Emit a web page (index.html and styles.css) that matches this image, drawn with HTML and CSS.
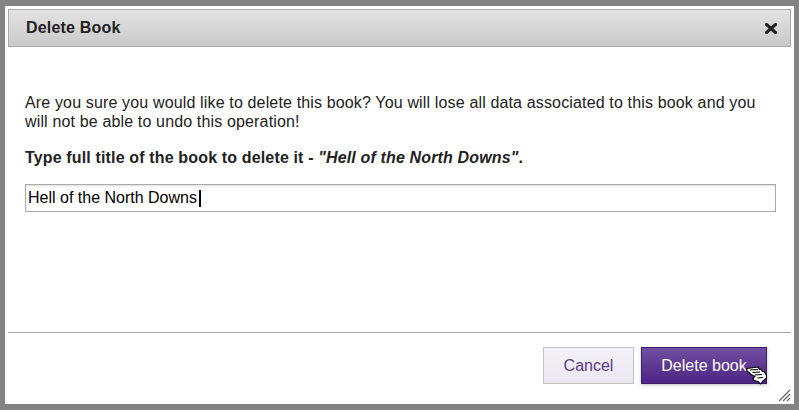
FILE: index.html
```html
<!DOCTYPE html>
<html lang="en">

<head>
	<meta charset="utf-8" />
	<title>Delete Book</title>
	<link rel="stylesheet" href="styles.css">
</head>

<body>
	<div class="dialog">
		<div class="titlebar">
			<span class="title">Delete Book</span>
			<button class="close" title="Close">
				<svg width="12" height="11" viewBox="0 0 12 11">
					<path d="M1.5 1.5 L10.5 9.5 M10.5 1.5 L1.5 9.5" stroke="#222" stroke-width="3.2" stroke-linecap="square" />
				</svg>
			</button>
		</div>

		<div class="content">
			<p class="warning">Are you sure you would like to delete this book? You will lose all data associated to this book and you will not be able to undo this operation!</p>
			<p class="confirm">Type full title of the book to delete it - <em>"Hell of the North Downs"</em>.</p>
			<div class="field"><input class="title-input" value="Hell of the North Downs"><span class="caret"></span></div>
		</div>

		<div class="buttonpane">
			<button class="btn btn-cancel">Cancel</button>
			<button class="btn btn-delete">Delete book</button>
		</div>

		<!-- mouse pointer resting on the delete button -->
		<svg class="pointer" width="22" height="20" viewBox="0 0 22 20">
			<path d="M1 3.5 L12 2 L13.5 4.5 L15 4 L16.5 6.5 L18 6.5 L20.5 10.5 L20.5 13 L17 16 L14.5 19 L12 16.5 L8 15.5 L7 13 L9 11.5 L5 9.5 L3 7.5 L1 6 Z" fill="#fff" stroke="#000" stroke-width="1.1" stroke-linejoin="round" />
			<path d="M4 5 L12 4.5 M6.5 7.5 L14 7 M8.5 10 L16 9.5 M11.5 13 L17 12.5" stroke="#000" stroke-width="1.2" />
		</svg>

		<svg class="grip" width="13" height="13" viewBox="0 0 13 13">
			<path d="M12 1 L1 12 M12 5 L5 12 M12 9 L9 12" stroke="#666" stroke-width="1.2" />
		</svg>
	</div>
</body>

</html>
```

FILE: styles.css
```css
body {
	margin: 0;
	background: #838383;
	font-family: "Liberation Sans", Arial, sans-serif;
	font-size: 16px;
	color: #222;
}

.dialog {
	position: relative;
	margin: 6px 5px;
	height: 398px;
	box-sizing: border-box;
	padding: 3px;
	background: #fff;
	display: flex;
	flex-direction: column;
}

.titlebar {
	height: 38px;
	box-sizing: border-box;
	border: 1px solid #aaa;
	background: linear-gradient(#e3e3e3, #c9c9c9);
	display: flex;
	align-items: center;
	justify-content: space-between;
	padding: 0 13px 0 17px;
}

.title {
	font-weight: bold;
	font-size: 16px;
	letter-spacing: 0.2px;
	color: #222;
}

.close {
	border: 0;
	background: none;
	padding: 0;
	width: 12px;
	height: 11px;
	display: flex;
	cursor: pointer;
}

.content {
	flex: 1;
	padding: 46px 15px 0 17px;
}

.content p {
	margin: 0 0 17px;
	line-height: 19px;
	letter-spacing: 0.15px;
}

.warning {
	padding-right: 10px;
}

.confirm {
	font-weight: bold;
}

.field {
	position: relative;
}

.title-input {
	display: block;
	width: 100%;
	height: 28px;
	box-sizing: border-box;
	border: 1px solid #aaa;
	box-shadow: inset 0 1px 2px #ddd;
	padding: 0 2px;
	font-family: inherit;
	font-size: 16px;
	color: #000;
	outline: none;
}

.caret {
	position: absolute;
	left: 174px;
	top: 6px;
	width: 2px;
	height: 17px;
	background: #000;
}

.buttonpane {
	border-top: 1px solid #aaa;
	padding: 14px 24px 17px;
	display: flex;
	justify-content: flex-end;
	gap: 7px;
}

.btn {
	height: 37px;
	font-family: inherit;
	font-size: 16px;
	padding: 0 10px;
	cursor: pointer;
}

.btn-cancel {
	width: 91px;
	border: 1px solid #c2c2c2;
	background: linear-gradient(#f4f2f8, #ebe7f1);
	color: #5a3a8e;
}

.btn-delete {
	width: 126px;
	border: 1px solid #3e1b6c;
	background: linear-gradient(#6f4e9f, #4d2584);
	color: #fff;
	box-shadow: 0 1px 3px rgba(0, 0, 0, 0.25);
}

.pointer {
	position: absolute;
	right: 26px;
	bottom: 19px;
}

.grip {
	position: absolute;
	right: 3px;
	bottom: 2px;
}
```
